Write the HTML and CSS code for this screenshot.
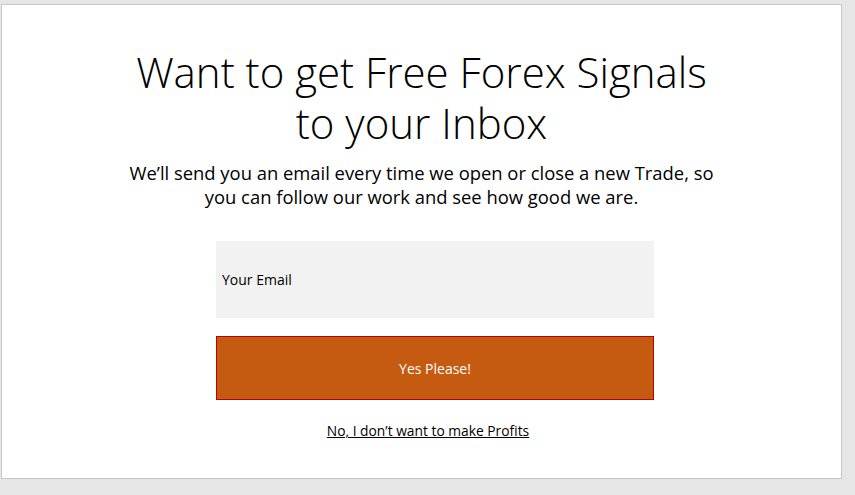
FILE: index.html
```html
<!DOCTYPE html>
<html>
<head>
<meta charset="utf-8">
<link rel="stylesheet" href="styles.css">
</head>
<body>
<div class="panel">
  <h1 class="title">Want to get Free Forex Signals<br>to your Inbox</h1>
  <p class="lead">We’ll send you an email every time we open or close a new Trade, so<br>you can follow our work and see how good we are.</p>
  <form class="form">
    <div class="email">Your Email</div>
    <div class="submit">Yes Please!</div>
    <a class="decline" href="#">No, I don’t want to make Profits</a>
  </form>
</div>
</body>
</html>
```
FILE: styles.css
```css
html, body {
  margin: 0;
  padding: 0;
}
body {
  background: #e6e6e6;
  padding: 4px 0 0 1px;
  font-family: "Open Sans", "Liberation Sans", sans-serif;
  color: #000;
}
.panel {
  box-sizing: border-box;
  width: 841px;
  height: 475px;
  background: #fff;
  border: 1px solid #c8c8c8;
  display: flex;
  flex-direction: column;
  align-items: center;
}
.title {
  margin: 41px 0 0;
  font-weight: 300;
  font-size: 42px;
  line-height: 51px;
  text-align: center;
}
.lead {
  margin: 13px 0 0;
  font-size: 18.4px;
  line-height: 24px;
  text-align: center;
}
.form {
  margin: 32px 0 0 27px;
  width: 438px;
  display: flex;
  flex-direction: column;
  align-items: center;
}
.email {
  box-sizing: border-box;
  align-self: stretch;
  height: 77px;
  background: #f2f2f2;
  padding-left: 6px;
  display: flex;
  align-items: center;
  font-size: 14px;
}
.submit {
  box-sizing: border-box;
  align-self: stretch;
  margin-top: 18px;
  height: 64px;
  background: #c55a11;
  border: 1px solid #c00000;
  color: #fff;
  display: flex;
  align-items: center;
  justify-content: center;
  font-size: 14px;
}
.decline {
  margin: 21px 14px 0 0;
  font-size: 13.8px;
  color: #000;
  text-decoration: underline;
}
```
